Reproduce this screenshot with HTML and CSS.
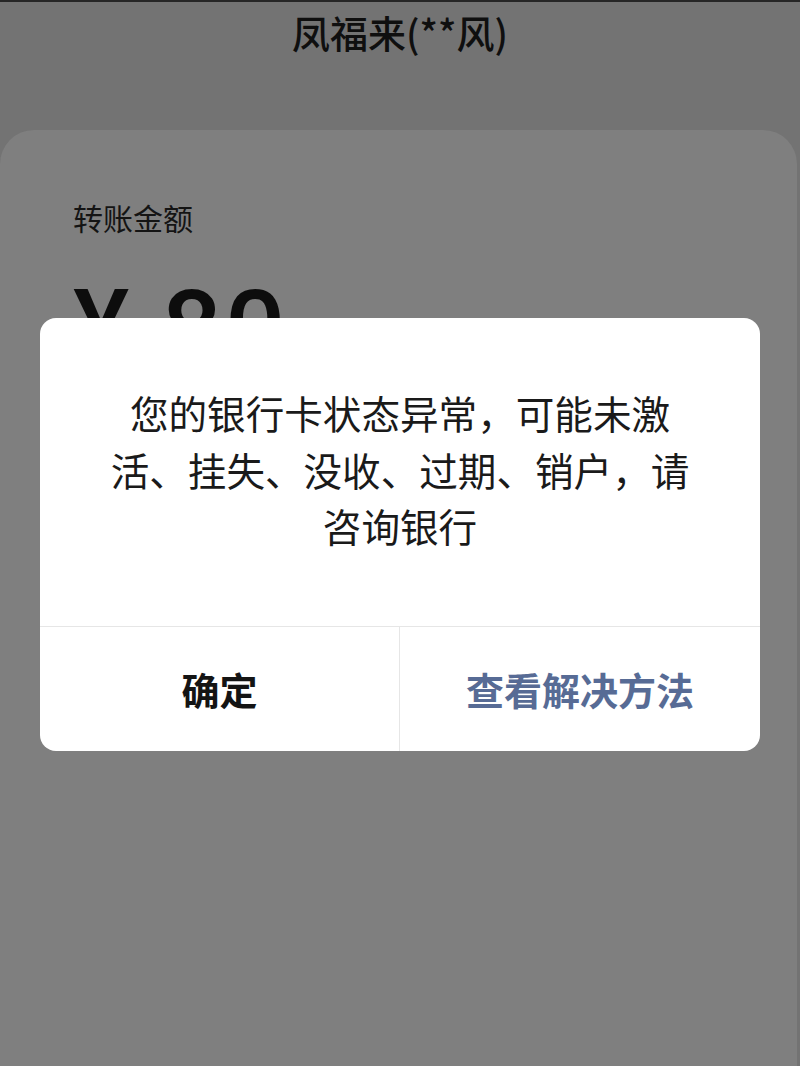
FILE: index.html
```html
<!DOCTYPE html>
<html lang="zh-CN">
<head>
<meta charset="utf-8">
<title>转账</title>
<link rel="stylesheet" href="styles.css">
</head>
<body>
<div class="page">
  <div class="status-line"></div>
  <header class="header">
    <h1 class="title">凤福来(**风)</h1>
  </header>
  <main class="card">
    <div class="label">转账金额</div>
    <div class="amount">¥ 80</div>
  </main>
  <div class="dialog" role="dialog">
    <div class="dialog-body">您的银行卡状态异常，可能未激活、挂失、没收、过期、销户，请咨询银行</div>
    <div class="dialog-actions">
      <div class="btn btn-ok">确定</div>
      <div class="btn btn-link">查看解决方法</div>
    </div>
  </div>
</div>
</body>
</html>
```

FILE: styles.css
```css
* { box-sizing: border-box; }
html, body {
  margin: 0;
  padding: 0;
}
body {
  background: #737373;
  font-family: "Noto Sans CJK SC", "Noto Sans", sans-serif;
  color: #111;
}
.page {
  position: relative;
  width: 800px;
  height: 1066px;
  overflow: hidden;
  display: flex;
  flex-direction: column;
}
.status-line {
  height: 2px;
  background: #262626;
  flex: none;
}
.header {
  height: 128px;
  flex: none;
  display: flex;
  justify-content: center;
}
.title {
  margin: 11px 0 0;
  font-size: 38px;
  line-height: 38px;
  font-weight: 500;
  color: #0f0f0f;
}
.card {
  flex: 1;
  background: #7f7f7f;
  border-radius: 34px 34px 0 0;
  margin: 0 3px 0 0;
  padding: 72px 0 0 73px;
}
.label {
  font-size: 30px;
  line-height: 30px;
  color: #141414;
}
.amount {
  margin-top: 47px;
  font-family: Roboto, "Noto Sans", sans-serif;
  font-weight: 500;
  font-size: 106px;
  line-height: 100px;
  color: #0d0d0d;
  letter-spacing: 3px;
}
.dialog {
  position: absolute;
  left: 40px;
  top: 318px;
  width: 720px;
  background: #fff;
  border-radius: 16px;
  overflow: hidden;
}
.dialog-body {
  padding: 66px 56px 72px;
  text-align: center;
  font-size: 38.6px;
  line-height: 56.5px;
  color: #1a1a1a;
}
.dialog-actions {
  display: grid;
  grid-template-columns: 1fr 1fr;
  border-top: 1px solid #e6e6e6;
  height: 125px;
}
.btn {
  display: flex;
  align-items: center;
  justify-content: center;
  font-size: 38px;
  font-weight: 700;
  padding-top: 0;
}
.btn-ok {
  color: #141414;
  border-right: 1px solid #e6e6e6;
}
.btn-link {
  color: #576b95;
}
```
